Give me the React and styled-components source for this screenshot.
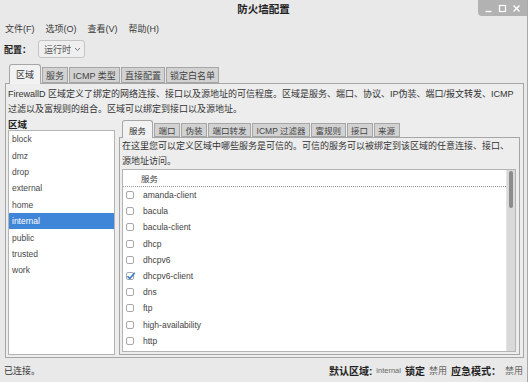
import styled, { createGlobalStyle } from 'styled-components';

const GlobalStyle = createGlobalStyle`
  html, body {
    margin: 0;
    padding: 0;
  }
  body {
    width: 528px;
    height: 382px;
    overflow: hidden;
    background: #e9e9e9;
    font-family: "Liberation Sans", "Noto Sans CJK SC", sans-serif;
    font-size: 8.5px;
    color: #333;
  }
`;

const Window = styled.div`
  width: 528px;
  height: 382px;
  box-sizing: border-box;
  display: flex;
  flex-direction: column;
  background: #e9e9e9;
  border-right: 1px solid #a9a9a9;
`;

const TitleBar = styled.div`
  height: 17px;
  display: grid;
  grid-template-columns: 1fr auto 1fr;
  align-items: center;
`;

const Title = styled.div`
  grid-column: 2;
  font-family: "Noto Sans CJK SC", sans-serif;
  font-weight: 700;
  font-size: 10.5px;
  color: #222;
`;

const Controls = styled.div`
  grid-column: 3;
  justify-self: end;
  align-self: start;
  width: 49px;
  height: 16px;
  background: #b2b2b2;
  border-bottom-left-radius: 4px;
  display: flex;
  align-items: center;
  justify-content: space-around;
  padding: 0 3px;
  box-sizing: border-box;
`;

const MenuBar = styled.div`
  height: 20px;
  display: flex;
  align-items: center;
  gap: 11px;
  padding-left: 5px;
  padding-top: 1px;
  font-size: 9px;
  color: #3a3a3a;
`;

const ConfigRow = styled.div`
  height: 22px;
  display: flex;
  align-items: center;
  padding-left: 4px;
  gap: 7px;
  font-size: 9px;
`;

const Bold = styled.span`
  font-weight: 700;
  color: #222;
  font-size: ${p => p.$size || 9}px;
`;

const Combo = styled.div`
  height: 18px;
  box-sizing: border-box;
  padding: 0 3px 0 5px;
  display: flex;
  align-items: center;
  gap: 3px;
  border: 1px solid #c4c4c4;
  border-radius: 3px;
  background: #efefef;
  color: #555;
`;

const OuterNotebook = styled.div`
  display: flex;
  flex-direction: column;
  margin: 4px 3px 0 5px;
  flex: 1;
  min-height: 0;
`;

const TabRow = styled.div`
  display: flex;
  align-items: flex-end;
  height: ${p => p.$height}px;
  padding-left: ${p => p.$indent}px;
  gap: 1px;
  position: relative;
  z-index: 1;
`;

const Tab = styled.div`
  box-sizing: border-box;
  height: ${p => (p.$active ? p.$height + 2 : p.$height - 2)}px;
  padding: 0 ${p => (p.$active ? 6 : p.$pad)}px;
  display: flex;
  align-items: center;
  white-space: nowrap;
  font-size: ${p => p.$size}px;
  border: 1px solid #a6a6a6;
  border-bottom: ${p => (p.$active ? 'none' : '1px solid #a6a6a6')};
  border-radius: ${p => (p.$active ? '3px 3px 0 0' : '0')};
  background: ${p => (p.$active ? '#f2f2f2' : '#d2d2d2')};
  margin-bottom: ${p => (p.$active ? -1 : 0)}px;
  color: ${p => (p.$active ? '#333' : '#444')};
`;

const Panel = styled.div`
  flex: 1;
  min-height: 0;
  display: flex;
  flex-direction: column;
  border: 1px solid #a6a6a6;
  background: #ededed;
  padding: ${p => p.$pad};
`;

const Description = styled.div`
  flex: none;
  display: flex;
  flex-direction: column;
  font-size: 9px;
  color: #333;
`;

const Line = styled.div`
  height: 15px;
  line-height: 15px;
  white-space: nowrap;
`;

const ZoneArea = styled.div`
  flex: 1;
  min-height: 0;
  display: flex;
  gap: 4px;
`;

const ZoneColumn = styled.div`
  width: 107px;
  display: flex;
  flex-direction: column;
`;

const ZoneLabel = styled.div`
  height: 13px;
  display: flex;
  align-items: center;
  font-weight: 700;
  font-size: 9.5px;
  color: #222;
`;

const ListBox = styled.div`
  flex: 1;
  min-height: 0;
  background: #fff;
  border: 1px solid #b4b4b4;
  box-sizing: border-box;
  display: flex;
`;

const ZoneList = styled.div`
  flex: 1;
  display: flex;
  flex-direction: column;
`;

const ZoneItem = styled.div`
  height: 16.4px;
  display: flex;
  align-items: center;
  padding-left: 3px;
  background: ${p => (p.$selected ? '#3f86d8' : 'transparent')};
  color: ${p => (p.$selected ? '#fff' : '#484848')};
`;

const RightColumn = styled.div`
  flex: 1;
  display: flex;
  flex-direction: column;
  padding-top: 3px;
`;

const ServiceList = styled.div`
  flex: 1;
  display: flex;
  flex-direction: column;
`;

const ListHeader = styled.div`
  height: 16px;
  display: flex;
  align-items: center;
  padding-left: 18px;
  border-bottom: 1px dotted #9a9a9a;
  color: #444;
`;

const ServiceRow = styled.div`
  height: 16.2px;
  display: flex;
  align-items: center;
  padding-left: 3px;
  gap: 9px;
  color: #444;
`;

const Check = styled.span`
  width: 8px;
  height: 8px;
  box-sizing: border-box;
  border: 1px solid #a8a8a8;
  border-radius: 2px;
  background: #fff;
  position: relative;
  flex: none;
`;

const CheckMark = styled.svg`
  position: absolute;
  left: -1px;
  top: -2px;
`;

const Scrollbar = styled.div`
  width: 9px;
  background: #d9d9d9;
  border-left: 1px solid #e4e4e4;
  padding: 1px 2px 0 2px;
  box-sizing: border-box;
`;

const Thumb = styled.div`
  height: 37px;
  background: #8c8c8c;
  border-radius: 2px;
`;

const StatusBar = styled.div`
  height: 24px;
  display: flex;
  align-items: center;
  justify-content: space-between;
  padding: 0 4px 0 4px;
  font-size: 9px;
`;

const StatusRight = styled.div`
  display: flex;
  align-items: center;
  gap: 4px;
`;

const Muted = styled.span`
  color: #666;
  font-size: ${p => p.$size || 9}px;
`;

const zones = ['block', 'dmz', 'drop', 'external', 'home', 'internal', 'public', 'trusted', 'work'];

const services = [
  'amanda-client',
  'bacula',
  'bacula-client',
  'dhcp',
  'dhcpv6',
  'dhcpv6-client',
  'dns',
  'ftp',
  'high-availability',
  'http'
];

const outerTabs = ['区域', '服务', 'ICMP 类型', '直接配置', '锁定白名单'];
const innerTabs = ['服务', '端口', '伪装', '端口转发', 'ICMP 过滤器', '富规则', '接口', '来源'];

const App = () => (
  <>
    <GlobalStyle />
    <Window>
      <TitleBar>
        <Title>防火墙配置</Title>
        <Controls>
          <svg width="9" height="9" viewBox="0 0 9 9">
            <path d="M1.5 7.5h6" stroke="#fff" strokeWidth="1.4" />
          </svg>
          <svg width="9" height="9" viewBox="0 0 9 9">
            <rect x="1.5" y="1.5" width="6" height="6" fill="none" stroke="#fff" strokeWidth="1.2" />
          </svg>
          <svg width="9" height="9" viewBox="0 0 9 9">
            <path d="M1.5 1.5l6 6M7.5 1.5l-6 6" stroke="#fff" strokeWidth="1.4" />
          </svg>
        </Controls>
      </TitleBar>

      <MenuBar>
        <span>文件(F)</span>
        <span>选项(O)</span>
        <span>查看(V)</span>
        <span>帮助(H)</span>
      </MenuBar>

      <ConfigRow>
        <Bold>配置：</Bold>
        <Combo>
          运行时
          <svg width="7" height="5" viewBox="0 0 7 5">
            <path d="M1 1l2.5 2.5L6 1" fill="none" stroke="#777" strokeWidth="1" />
          </svg>
        </Combo>
      </ConfigRow>

      <OuterNotebook>
        <TabRow $height={19} $indent={4}>
          {outerTabs.map((t, i) => (
            <Tab key={t} $active={i === 0} $height={18} $size={9} $pad={3}>
              {t}
            </Tab>
          ))}
        </TabRow>
        <Panel $pad="3px 3px 2px 2px">
          <Description>
            <Line>
              FirewallD 区域定义了绑定的网络连接、接口以及源地址的可信程度。区域是服务、端口、协议、IP伪装、端口/报文转发、ICMP
            </Line>
            <Line>过滤以及富规则的组合。区域可以绑定到接口以及源地址。</Line>
          </Description>
          <ZoneArea>
            <ZoneColumn>
              <ZoneLabel>区域</ZoneLabel>
              <ListBox>
                <ZoneList>
                  {zones.map(z => (
                    <ZoneItem key={z} $selected={z === 'internal'}>
                      {z}
                    </ZoneItem>
                  ))}
                </ZoneList>
              </ListBox>
            </ZoneColumn>

            <RightColumn>
              <TabRow $height={17} $indent={3}>
                {innerTabs.map((t, i) => (
                  <Tab key={t} $active={i === 0} $height={16} $size={8.5} $pad={3.5}>
                    {t}
                  </Tab>
                ))}
              </TabRow>
              <Panel $pad="1px 3px 2px 2px">
                <Description>
                  <Line>在这里您可以定义区域中哪些服务是可信的。可信的服务可以被绑定到该区域的任意连接、接口、</Line>
                  <Line>源地址访问。</Line>
                </Description>
                <ListBox>
                  <ServiceList>
                    <ListHeader>服务</ListHeader>
                    {services.map(s => (
                      <ServiceRow key={s}>
                        <Check>
                          {s === 'dhcpv6-client' && (
                            <CheckMark width="10" height="10" viewBox="0 0 10 10">
                              <path
                                d="M1.5 5.2l2.3 2.4L8.8 1.8"
                                fill="none"
                                stroke="#3d7ccc"
                                strokeWidth="1.6"
                              />
                            </CheckMark>
                          )}
                        </Check>
                        {s}
                      </ServiceRow>
                    ))}
                  </ServiceList>
                  <Scrollbar>
                    <Thumb />
                  </Scrollbar>
                </ListBox>
              </Panel>
            </RightColumn>
          </ZoneArea>
        </Panel>
      </OuterNotebook>

      <StatusBar>
        <span>已连接。</span>
        <StatusRight>
          <Bold $size={10}>默认区域:</Bold>
          <Muted $size={7.5}>internal</Muted>
          <Bold $size={10}>锁定</Bold>
          <Muted>禁用</Muted>
          <Bold $size={10}>应急模式：</Bold>
          <Muted>禁用</Muted>
        </StatusRight>
      </StatusBar>
    </Window>
  </>
);

export default App;
